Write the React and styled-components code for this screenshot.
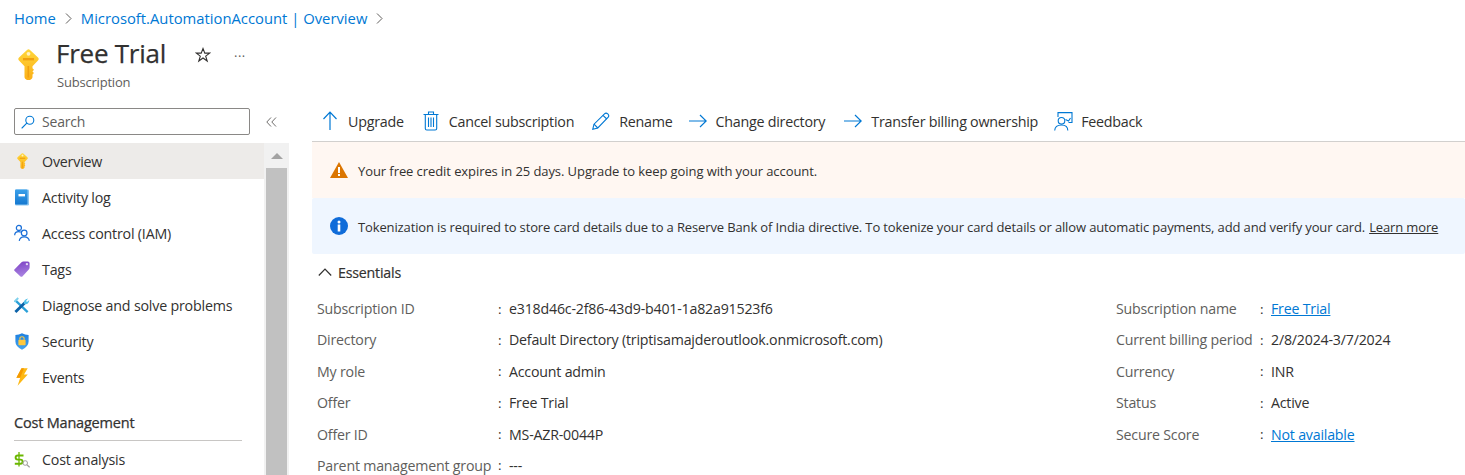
import React from "react";
import styled, { createGlobalStyle } from "styled-components";

const Global = createGlobalStyle`
  html, body { margin: 0; padding: 0; background: #fff; overflow: hidden; }
  body { font-family: "Open Sans", "Noto Sans", sans-serif; font-size: 13.5px; letter-spacing: -0.2px; color: #323130; }
  * { box-sizing: border-box; }
`;

const Page = styled.div`
  width: 1465px;
  height: 475px;
  overflow: hidden;
  display: flex;
  flex-direction: column;
`;
const Crumbs = styled.nav`
  display: flex;
  align-items: center;
  height: 36px;
  padding-left: 14px;
  gap: 8px;
  font-size: 14.8px;
  letter-spacing: 0;
`;
const CrumbLink = styled.a`
  color: #0078d4;
`;
const Header = styled.header`
  display: flex;
  height: 57px;
  padding: 0 0 0 18px;
`;
const KeyBox = styled.div`
  width: 39px;
  padding-top: 13px;
`;
const TitleBox = styled.div`
  display: flex;
  flex-direction: column;
  width: 137px;
`;
const Title = styled.h1`
  margin: -2px 0 1px -1px;
  font-size: 26px;
  font-weight: 400;
  line-height: 38px;
  letter-spacing: -0.25px;
  color: #323130;
  -webkit-text-stroke: 0.25px #323130;
`;
const Sub = styled.div`
  font-size: 13px;
  line-height: 18px;
  color: #605e5c;
`;
const HeadActions = styled.div`
  display: flex;
  gap: 23px;
  align-items: center;
  height: 38px;
  padding-left: 1px;
`;
const Dots = styled.span`
  font-size: 13px;
  letter-spacing: 0.5px;
  color: #605e5c;
  line-height: 1;
  margin-top: 2px;
`;
const Body = styled.div`
  display: flex;
  flex: 1;
  min-height: 0;
  padding-top: 10px;
`;
const Side = styled.aside`
  width: 312px;
  flex: none;
  display: flex;
  flex-direction: column;
`;
const SearchRow = styled.div`
  display: flex;
  align-items: center;
  height: 40px;
  padding: 5px 0 8px 14px;
  flex: none;
`;
const SearchBox = styled.div`
  width: 236px;
  height: 27px;
  border: 1px solid #8a8886;
  border-radius: 2px;
  display: flex;
  align-items: center;
  padding-left: 6px;
  gap: 7px;
  color: #605e5c;
  font-size: 14px;
`;
const Collapse = styled.div`
  margin-left: 16px;
  display: flex;
`;
const SideBody = styled.div`
  display: flex;
  width: 289px;
  flex: 1;
  min-height: 0;
`;
const NavList = styled.ul`
  list-style: none;
  margin: 0;
  padding: 0;
  width: 264px;
  flex: none;
`;
const NavItem = styled.li`
  height: 36px;
  display: flex;
  align-items: center;
  padding-left: 14px;
  gap: 12px;
  background: ${(p) => (p.$active ? "#edebe9" : "transparent")};
  font-size: 14.25px;
`;
const NavIcon = styled.span`
  width: 16px;
  height: 18px;
  display: flex;
  align-items: center;
  justify-content: center;
  flex: none;
`;
const NavHead = styled.li`
  margin: 15px 22px 0 14px;
  height: 31px;
  line-height: 26px;
  font-size: 14.5px;
  -webkit-text-stroke: 0.25px #323130;
  border-bottom: 1px solid #c8c6c4;
`;
const ScrollBar = styled.div`
  width: 25px;
  padding: 0 2px;
  background: #f1f1f1;
  display: flex;
  flex-direction: column;
`;
const ScrollUp = styled.div`
  height: 25px;
  display: flex;
  justify-content: center;
  padding-top: 10px;
`;
const ScrollThumb = styled.div`
  flex: 1;
  background: #c1c1c1;
`;
const Main = styled.main`
  flex: 1;
  min-width: 0;
  display: flex;
  flex-direction: column;
`;
const Toolbar = styled.div`
  height: 39px;
  border-bottom: 1px solid #d2d0ce;
  display: flex;
  align-items: center;
  padding: 0 0 2px 10px;
  flex: none;
`;
const ToolBtn = styled.button`
  background: none;
  border: 0;
  padding: 0;
  margin: 0 0 0 ${(p) => p.$ml || 0}px;
  display: flex;
  align-items: center;
  gap: ${(p) => p.$gap || 7}px;
  font: inherit;
  font-size: 14.3px;
  letter-spacing: -0.25px;
  color: #323130;
`;
const Banner = styled.div`
  height: 56px;
  background: ${(p) => p.$bg};
  display: flex;
  align-items: center;
  padding-left: 18px;
  gap: 10px;
  font-size: 13px;
  color: #323130;
  border-radius: ${(p) => p.$r || 0};
  flex: none;
`;
const BannerText = styled.span`
  padding-top: 2px;
  letter-spacing: ${(p) => p.$ls};
`;
const BannerLink = styled.a`
  color: #323130;
  text-decoration: underline;
  margin-left: 4px;
`;
const EssHead = styled.div`
  height: 36px;
  display: flex;
  align-items: center;
  padding-left: 6px;
  gap: 6px;
  font-size: 14.2px;
  -webkit-text-stroke: 0.2px #323130;
  flex: none;
`;
const Props = styled.div`
  display: grid;
  grid-template-columns: 799px 1fr;
  padding-left: 5px;
  margin-top: 2.85px;
`;
const Col = styled.div`
  display: grid;
  grid-template-columns: ${(p) => p.$cols};
  grid-auto-rows: 31.4px;
  align-items: center;
`;
const Label = styled.div`
  color: #605e5c;
  font-size: 14.2px;
  white-space: nowrap;
`;
const Sep = styled.div`
  color: #323130;
`;
const Value = styled.div`
  font-size: 14.2px;
  white-space: nowrap;
  color: #323130;
`;
const ValueLink = styled.a`
  color: #0078d4;
  text-decoration: underline;
`;

const Chevron = () => (
  <svg width="9" height="12" viewBox="0 0 9 12" fill="none" stroke="#605e5c" strokeWidth="1">
    <path d="M2 1.5L7 6.5L2 11.5" />
  </svg>
);
const KeyIcon = ({ w = 21, h = 31 }) => (
  <svg width={w} height={h} viewBox="0 0 21 31">
    <defs>
      <linearGradient id="keyFill" x1="0" y1="0" x2="0" y2="1">
        <stop offset="0" stopColor="#ffd63a" />
        <stop offset="1" stopColor="#fbb018" />
      </linearGradient>
    </defs>
    <path d="M9 0.9Q10.5 -0.2 12 0.9L20 8.4Q21.4 10 20 11.6L14.5 17.2V19.2L16 20.8L14.5 22.4L16 24L14.5 25.6V28.2Q13.8 31 10.5 31Q7.2 31 6.5 28.2V17.2L1 11.6Q-0.4 10 1 8.4Z" fill="url(#keyFill)" />
    <circle cx="10.5" cy="4.8" r="1.9" fill="#fff3c4" />
    <rect x="5" y="9" width="11" height="2.4" fill="#f0a010" />
    <rect x="9.5" y="17" width="1.6" height="11.5" fill="#f0a010" />
  </svg>
);
const Star = () => (
  <svg width="16" height="16" viewBox="0 0 16 16" fill="none" stroke="#323130" strokeWidth="1.1">
    <path d="M8 1.5L9.8 6.1H14.7L10.7 9.1L12.2 14L8 11L3.8 14L5.3 9.1L1.3 6.1H6.2Z" />
  </svg>
);
const SearchGlass = () => (
  <svg width="14" height="14" viewBox="0 0 14 14" fill="none" stroke="#0078d4" strokeWidth="1.1">
    <circle cx="8.8" cy="5.2" r="4" />
    <path d="M5.8 8.2L1 13" strokeLinecap="round" />
  </svg>
);
const DoubleLeft = () => (
  <svg width="11" height="10" viewBox="0 0 11 10" fill="none" stroke="#605e5c" strokeWidth="0.9">
    <path d="M5 0.5L0.8 5L5 9.5M10 0.5L5.8 5L10 9.5" />
  </svg>
);
const ArrowUp = () => (
  <svg width="16" height="20" viewBox="0 0 16 20" fill="none" stroke="#0078d4" strokeWidth="1.2">
    <path d="M8 19V1.5M1.5 8L8 1.2L14.5 8" />
  </svg>
);
const Trash = () => (
  <svg width="16" height="20" viewBox="0 0 16 20" fill="none" stroke="#0078d4" strokeWidth="1.1">
    <path d="M0.5 3.5H15.5M5.5 3.5V1H10.5V3.5M2.3 3.5V17.5Q2.3 19 3.8 19H12.2Q13.7 19 13.7 17.5V3.5" />
    <path d="M5.5 6.5V16M8 6.5V16M10.5 6.5V16" />
  </svg>
);
const Pencil = () => (
  <svg width="18" height="18" viewBox="0 0 18 18" fill="none" stroke="#0078d4" strokeWidth="1.1">
    <path d="M0.8 17.2L2 12.2L12.5 1.8Q14 0.5 15.8 1.9Q17.5 3.6 16.2 5.2L5.8 16Z" />
    <path d="M2 12.2L5.8 16M11 3.3L14.8 7" />
  </svg>
);
const ArrowRight = () => (
  <svg width="18" height="14" viewBox="0 0 18 14" fill="none" stroke="#0078d4" strokeWidth="1.2">
    <path d="M0 7H17M11 1L17.2 7L11 13" />
  </svg>
);
const FeedbackIcon = () => (
  <svg width="19" height="19" viewBox="0 0 19 19" fill="none" stroke="#0078d4" strokeWidth="1.1">
    <path d="M4 5V0.6H18V10.5H14.5" />
    <circle cx="7.5" cy="8.8" r="3.3" />
    <path d="M0.7 18.5Q1 13 7.5 13Q13.8 13 13.8 18.5" />
    <path d="M11.5 7.5L14.5 9L16.5 6" />
  </svg>
);
const WarnIcon = () => (
  <svg width="18" height="16" viewBox="0 0 18 16">
    <path d="M9 0L18 16H0Z" fill="#db7500" />
    <rect x="8" y="5" width="2" height="6" fill="#fff" />
    <rect x="8" y="12" width="2" height="2" fill="#fff" />
  </svg>
);
const InfoIcon = () => (
  <svg width="18" height="18" viewBox="0 0 18 18">
    <circle cx="9" cy="9" r="9" fill="#0f6cd9" />
    <rect x="7.7" y="7.5" width="2.6" height="7" fill="#fff" />
    <circle cx="9" cy="4.9" r="1.5" fill="#fff" />
  </svg>
);
const ChevUp = () => (
  <svg width="14" height="8" viewBox="0 0 14 8" fill="none" stroke="#323130" strokeWidth="1.2">
    <path d="M0.8 7.5L7 1.2L13.2 7.5" />
  </svg>
);
const BookIcon = () => (
  <svg width="14" height="17" viewBox="0 0 14 17">
    <defs>
      <linearGradient id="bookFill" x1="0" y1="0" x2="0" y2="1">
        <stop offset="0" stopColor="#3aa0ea" />
        <stop offset="1" stopColor="#1578d0" />
      </linearGradient>
    </defs>
    <rect x="0" y="0.5" width="14" height="16" rx="1.2" fill="#8cc6f0" />
    <rect x="0" y="0.5" width="12.5" height="15" rx="1" fill="url(#bookFill)" />
    <rect x="3.5" y="5" width="6.5" height="2.4" fill="#fff" />
  </svg>
);
const AccessIcon = () => (
  <svg width="17" height="18" viewBox="0 0 17 18" fill="none" stroke="#1a6fd8" strokeWidth="1.3">
    <circle cx="5.2" cy="3.6" r="2.7" />
    <path d="M0.7 11.5Q0.7 7.6 5 7.6Q6.2 7.6 7.2 8" />
    <circle cx="10.8" cy="9" r="3" />
    <path d="M5.6 17.4Q6 13 10.8 13Q15.8 13 16.3 17.4" />
  </svg>
);
const TagIcon = () => (
  <svg width="16" height="16" viewBox="0 0 16 16">
    <defs>
      <linearGradient id="tagFill" x1="0" y1="0" x2="0.2" y2="1">
        <stop offset="0" stopColor="#7c3fc4" />
        <stop offset="1" stopColor="#a781e0" />
      </linearGradient>
    </defs>
    <path d="M0.4 8.4L7.5 1.2Q8.3 0.4 9.3 0.4H13.8Q15.6 0.4 15.6 2.2V6.5Q15.6 7.6 14.8 8.4L8.6 15.2Q7.4 16.2 6.2 15.2L0.4 9.8Q-0.1 9 0.4 8.4Z" fill="url(#tagFill)" />
    <circle cx="12.9" cy="3.1" r="1.2" fill="#e4d8f5" />
  </svg>
);
const ToolsIcon = () => (
  <svg width="17" height="17" viewBox="0 0 17 17" fill="none">
    <path d="M1.5 3L14.5 15.5" stroke="#2aa0d8" strokeWidth="2.4" />
    <path d="M0.5 4.5L4.5 0.5" stroke="#7ed0ec" strokeWidth="2" />
    <path d="M11.5 5.5L1.5 15.5" stroke="#0b62a8" strokeWidth="3" />
    <path d="M10.5 6.5Q9.5 2.5 15 1L12.8 3.6L13.8 4.8L16.3 2.6Q15.6 7.8 11 7Z" fill="#50c0e8" />
  </svg>
);
const ShieldIcon = () => (
  <svg width="14" height="17" viewBox="0 0 14 17">
    <defs>
      <linearGradient id="shieldFill" x1="0" y1="0" x2="0" y2="1">
        <stop offset="0" stopColor="#1c7fe0" />
        <stop offset="1" stopColor="#45a4ee" />
      </linearGradient>
    </defs>
    <path d="M7 0.3Q10 2 13.6 2V8.5Q13.6 13.5 7 16.7Q0.4 13.5 0.4 8.5V2Q4 2 7 0.3Z" fill="url(#shieldFill)" />
    <rect x="3.4" y="6.8" width="7.2" height="5.4" rx="0.8" fill="#ffc83d" />
    <path d="M4.9 6.8V5.5Q4.9 3.7 7 3.7Q9.1 3.7 9.1 5.5V6.8" fill="none" stroke="#ffc83d" strokeWidth="1.1" />
  </svg>
);
const BoltIcon = () => (
  <svg width="12" height="18" viewBox="0 0 12 18">
    <path d="M5.5 0.3H11.7L8 6.6H11.8L1.6 17.7L4.2 9.8H0.4Z" fill="#fdb813" />
    <path d="M5.5 0.3H8L4.2 9.8H0.4Z" fill="#f59a00" />
  </svg>
);
const CostIcon = () => (
  <svg width="16" height="17" viewBox="0 0 16 17" fill="none">
    <path d="M9.5 4.5H3.8Q1.6 4.5 1.6 6.6Q1.6 8.6 3.8 8.6H6.4Q8.6 8.6 8.6 10.7Q8.6 12.8 6.4 12.8H0.8" stroke="#6bb700" strokeWidth="1.9" />
    <path d="M5 1V15.5" stroke="#6bb700" strokeWidth="1.3" />
    <circle cx="11.2" cy="12" r="2.3" stroke="#a19f9d" strokeWidth="1" />
    <path d="M12.9 13.7L15.6 16.3" stroke="#a19f9d" strokeWidth="1.2" />
  </svg>
);

const leftRows = [
  ["Subscription ID", "e318d46c-2f86-43d9-b401-1a82a91523f6"],
  ["Directory", "Default Directory (triptisamajderoutlook.onmicrosoft.com)"],
  ["My role", "Account admin"],
  ["Offer", "Free Trial"],
  ["Offer ID", "MS-AZR-0044P"],
  ["Parent management group", "---"],
];
const rightRows = [
  ["Subscription name", "Free Trial", true],
  ["Current billing period", "2/8/2024-3/7/2024"],
  ["Currency", "INR"],
  ["Status", "Active"],
  ["Secure Score", "Not available", true],
];
const navTop = [
  ["Overview", <KeyIcon w={11} h={16} />, true],
  ["Activity log", <BookIcon />],
  ["Access control (IAM)", <AccessIcon />],
  ["Tags", <TagIcon />],
  ["Diagnose and solve problems", <ToolsIcon />],
  ["Security", <ShieldIcon />],
  ["Events", <BoltIcon />],
];

export default function App() {
  return (
    <Page>
      <Global />
      <Crumbs>
        <CrumbLink>Home</CrumbLink>
        <Chevron />
        <CrumbLink>Microsoft.AutomationAccount | Overview</CrumbLink>
        <Chevron />
      </Crumbs>
      <Header>
        <KeyBox>
          <KeyIcon />
        </KeyBox>
        <TitleBox>
          <Title>Free Trial</Title>
          <Sub>Subscription</Sub>
        </TitleBox>
        <HeadActions>
          <Star />
          <Dots>···</Dots>
        </HeadActions>
      </Header>
      <Body>
        <Side>
          <SearchRow>
            <SearchBox>
              <SearchGlass />
              Search
            </SearchBox>
            <Collapse>
              <DoubleLeft />
            </Collapse>
          </SearchRow>
          <SideBody>
            <NavList>
              {navTop.map(([label, icon, active]) => (
                <NavItem key={label} $active={active}>
                  <NavIcon>{icon}</NavIcon>
                  {label}
                </NavItem>
              ))}
              <NavHead>Cost Management</NavHead>
              <NavItem>
                <NavIcon>
                  <CostIcon />
                </NavIcon>
                Cost analysis
              </NavItem>
            </NavList>
            <ScrollBar>
              <ScrollUp>
                <svg width="12" height="6" viewBox="0 0 12 6">
                  <path d="M6 0L12 6H0Z" fill="#a3a3a3" />
                </svg>
              </ScrollUp>
              <ScrollThumb />
            </ScrollBar>
          </SideBody>
        </Side>
        <Main>
          <Toolbar>
            <ToolBtn $gap={10}>
              <ArrowUp />
              Upgrade
            </ToolBtn>
            <ToolBtn $ml={19} $gap={10}>
              <Trash />
              Cancel subscription
            </ToolBtn>
            <ToolBtn $ml={18} $gap={9}>
              <Pencil />
              Rename
            </ToolBtn>
            <ToolBtn $ml={16} $gap={9}>
              <ArrowRight />
              Change directory
            </ToolBtn>
            <ToolBtn $ml={19} $gap={9}>
              <ArrowRight />
              Transfer billing ownership
            </ToolBtn>
            <ToolBtn $ml={16} $gap={8}>
              <FeedbackIcon />
              Feedback
            </ToolBtn>
          </Toolbar>
          <Banner $bg="#fff7f2">
            <WarnIcon />
            <BannerText $ls="-0.08px">Your free credit expires in 25 days. Upgrade to keep going with your account.</BannerText>
          </Banner>
          <Banner $bg="#eff6ff" $r="2px">
            <InfoIcon />
            <BannerText $ls="-0.13px">
              Tokenization is required to store card details due to a Reserve Bank of India directive. To tokenize your card details or allow automatic payments, add and verify your card.
              <BannerLink>Learn more</BannerLink>
            </BannerText>
          </Banner>
          <EssHead>
            <ChevUp />
            Essentials
          </EssHead>
          <Props>
            <Col $cols="181px 11px 1fr">
              {leftRows.map(([l, v]) => (
                <React.Fragment key={l}>
                  <Label>{l}</Label>
                  <Sep>:</Sep>
                  <Value>{v}</Value>
                </React.Fragment>
              ))}
            </Col>
            <Col $cols="144px 11px 1fr">
              {rightRows.map(([l, v, link]) => (
                <React.Fragment key={l}>
                  <Label>{l}</Label>
                  <Sep>:</Sep>
                  <Value>{link ? <ValueLink>{v}</ValueLink> : v}</Value>
                </React.Fragment>
              ))}
            </Col>
          </Props>
        </Main>
      </Body>
    </Page>
  );
}
